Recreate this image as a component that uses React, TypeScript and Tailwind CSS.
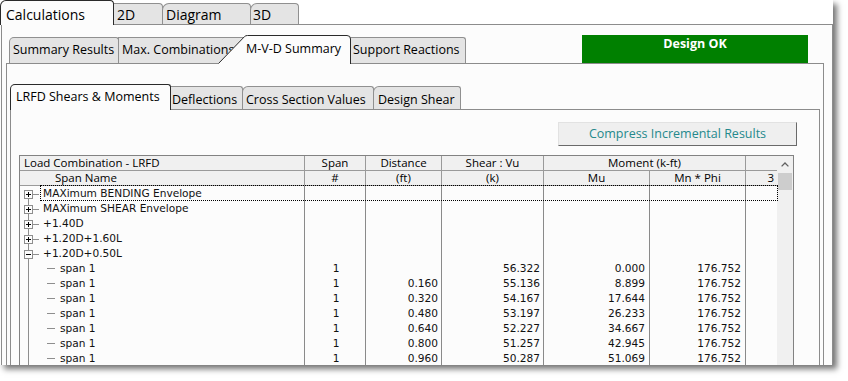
import { memo } from "react"

const uiFont = "font-['Open_Sans','Noto_Sans',sans-serif]"
const gridFont = "font-['DejaVu_Sans','Verdana',sans-serif]"

const groups = [
  "MAXimum BENDING Envelope",
  "MAXimum SHEAR Envelope",
  "+1.40D",
  "+1.20D+1.60L",
  "+1.20D+0.50L",
]

// distance, shear, Mu  (Mn * Phi is constant)
const spanRows = [
  ["", "56.322", "0.000"],
  ["0.160", "55.136", "8.899"],
  ["0.320", "54.167", "17.644"],
  ["0.480", "53.197", "26.233"],
  ["0.640", "52.227", "34.667"],
  ["0.800", "51.257", "42.945"],
  ["0.960", "50.287", "51.069"],
]

const ExpandBox = ({ open }: { open: boolean }) => (
  <span className="absolute left-[4px] top-[4px] h-[9px] w-[9px] border border-[#8e8e8e] bg-[#fcfcfc]">
    <span className="absolute left-[1px] top-[3px] h-px w-[5px] bg-black" />
    {!open && <span className="absolute left-[3px] top-[1px] h-[5px] w-px bg-black" />}
  </span>
)

const NumCells = ({ span, dist, shear, mu, mn }: { span: string; dist: string; shear: string; mu: string; mn: string }) => (
  <>
    <div className="w-[61px] shrink-0 border-r border-[#8a8a8a] pl-[2px] text-center">{span}</div>
    <div className="w-[76px] shrink-0 border-r border-[#8a8a8a] pr-[3px] text-right">{dist}</div>
    <div className="w-[102px] shrink-0 border-r border-[#8a8a8a] pr-[3px] text-right">{shear}</div>
    <div className="w-[106px] shrink-0 border-r border-[#8a8a8a] pr-[4px] text-right">{mu}</div>
    <div className="w-[96px] shrink-0 border-r border-[#8a8a8a] pr-[4px] text-right">{mn}</div>
    <div className="w-[31px] shrink-0" />
  </>
)

const ResultsGrid = () => {
  return (
    <div className="ml-[8px] mt-[9px] flex min-h-0 w-[775px] flex-1 border border-b-0 border-[#828282] bg-[#fcfcfc]">
      {/* Columns */}
      <div className="flex w-[757px] shrink-0 flex-col">
        {/* Header */}
        <div className={`${uiFont} bg-[#f0f0f0] text-[11.5px] leading-[14px] text-black`}>
          <div className="flex h-[15px] border-b border-[#9a9a9a]">
            <div className="w-[285px] shrink-0 border-r border-[#9a9a9a] pl-[4px]">Load Combination - LRFD</div>
            <div className="w-[61px] shrink-0 border-r border-[#9a9a9a] text-center">Span</div>
            <div className="w-[76px] shrink-0 border-r border-[#9a9a9a] text-center">Distance</div>
            <div className="w-[102px] shrink-0 border-r border-[#9a9a9a] text-center">Shear : Vu</div>
            <div className="w-[202px] shrink-0 border-r border-[#9a9a9a] text-center">Moment (k-ft)</div>
            <div className="w-[31px] shrink-0" />
          </div>
          <div className="flex h-[15px] border-b border-[#9a9a9a]">
            <div className="w-[285px] shrink-0 border-r border-[#9a9a9a] pl-[35px]">Span Name</div>
            <div className="w-[61px] shrink-0 border-r border-[#9a9a9a] text-center">#</div>
            <div className="w-[76px] shrink-0 border-r border-[#9a9a9a] text-center">(ft)</div>
            <div className="w-[102px] shrink-0 border-r border-[#9a9a9a] text-center">(k)</div>
            <div className="w-[106px] shrink-0 border-r border-[#9a9a9a] text-center">Mu</div>
            <div className="w-[96px] shrink-0 border-r border-[#9a9a9a] text-center">Mn * Phi</div>
            <div className="w-[31px] shrink-0 pr-[3px] text-right">3</div>
          </div>
        </div>

        {/* Rows */}
        <div className={`${gridFont} relative text-[10.6px] leading-[15px] text-[#111]`}>
          {/* Focus rectangle */}
          <div className="pointer-events-none absolute -top-px left-[20px] z-10 h-[16px] w-[738px] border border-dotted border-black" />

          {groups.map((g, i) => (
            <div key={g} className="flex h-[15px]">
              <div className="relative w-[285px] shrink-0 border-r border-[#8a8a8a] pl-[23px]">
                <span className={`absolute left-[8px] w-px bg-[#8e8e8e] ${i === 0 ? "top-[8px]" : "top-0"} bottom-0`} />
                <span className="absolute left-[13px] top-[8px] h-px w-[6px] bg-[#8e8e8e]" />
                <ExpandBox open={i === groups.length - 1} />
                {g}
              </div>
              <NumCells span="" dist="" shear="" mu="" mn="" />
            </div>
          ))}

          {spanRows.map(([dist, shear, mu], i) => (
            <div key={i} className="flex h-[15px]">
              <div className="relative w-[285px] shrink-0 border-r border-[#8a8a8a] pl-[40px]">
                <span className="absolute bottom-0 left-[8px] top-0 w-px bg-[#8e8e8e]" />
                <span className="absolute left-[27px] top-[7px] h-px w-[8px] bg-[#8e8e8e]" />
                span 1
              </div>
              <NumCells span="1" dist={dist} shear={shear} mu={mu} mn="176.752" />
            </div>
          ))}
        </div>
      </div>

      {/* Scrollbar */}
      <div className="flex w-[16px] shrink-0 flex-col bg-[#f0f0f0]">
        <div className="flex h-[17px] items-center justify-center">
          <svg width="8" height="5" viewBox="0 0 8 5">
            <path d="M0.6 4.4 L4 1 L7.4 4.4" fill="none" stroke="#606060" strokeWidth="1.3" />
          </svg>
        </div>
        <div className="ml-[1px] h-[17px] w-[14px] bg-[#cdcdcd]" />
      </div>
    </div>
  )
}

const App = () => {
  return (
    <div className={`${uiFont} h-[381px] w-[848px] bg-white`}>
      <div className="flex h-[365px] w-[833px] flex-col overflow-hidden bg-[#fcfcfc] shadow-[4px_4px_6px_rgba(0,0,0,0.55)]">
        {/* Main tabs */}
        <div className="flex h-[24px] shrink-0 items-end bg-white text-[14px] leading-[19px] text-black">
          <div className="relative z-10 -mb-px h-[25px] w-[114px] rounded-tl-[6px] rounded-tr-[4px] border border-b-0 border-[#2a2a2a] bg-[#fcfcfc] pl-[5px] pt-[4px]">
            Calculations
          </div>
          <div className="-ml-px h-[21px] w-[50px] rounded-tr-[4px] border border-b-0 border-[#909090] bg-[#e4e4e4] pl-[3px] pt-[1px]">
            2D
          </div>
          <div className="-ml-px h-[21px] w-[89px] rounded-tl-[7px] rounded-tr-[4px] border border-b-0 border-[#909090] bg-[#e4e4e4] pl-[3px] pt-[1px]">
            Diagram
          </div>
          <div className="-ml-px h-[21px] w-[49px] rounded-tl-[7px] rounded-tr-[4px] border border-b-0 border-[#909090] bg-[#e4e4e4] pl-[2px] pt-[1px]">
            3D
          </div>
        </div>

        {/* Level 1 page */}
        <div className="ml-[1px] flex min-h-0 flex-1 flex-col border-l border-r border-t border-[#8c8c8c] pt-[10px]">
          <div className="ml-[4px] mr-[8px] flex min-h-0 flex-1 flex-col">
            {/* Result tabs + status */}
            <div className="flex h-[28px] shrink-0 items-end pl-[3px] text-[12.5px] leading-[17px] text-black">
              <div className="h-[26px] w-[110px] rounded-tl-[5px] rounded-tr-[3px] border border-b-0 border-[#909090] bg-[#e4e4e4] pl-[3px] pt-[3px]">
                Summary Results
              </div>
              <div className="-ml-px h-[26px] w-[130px] shrink-0 overflow-hidden whitespace-nowrap rounded-tr-[3px] border border-b-0 border-[#909090] bg-[#e4e4e4] pl-[3px] pt-[3px]">
                Max. Combinations
              </div>
              <div className="relative z-10 -mb-px -ml-[30px] h-[29px] w-[133px] shrink-0">
                <svg className="absolute inset-0" width="133" height="29" viewBox="0 0 133 29">
                  <path d="M0 29 L0.5 28.5 L26.5 1.6 Q27.6 0.5 29.5 0.5 L129 0.5 Q132.5 0.5 132.5 4 L132.5 29 Z" fill="#fcfcfc" stroke="none" />
                  <path d="M0.5 28.5 L26.5 1.6 Q27.6 0.5 29.5 0.5 L129 0.5 Q132.5 0.5 132.5 4 L132.5 29" fill="none" stroke="#2a2a2a" strokeWidth="1" />
                </svg>
                <div className="relative whitespace-nowrap pl-[28px] pt-[5px]">M-V-D Summary</div>
              </div>
              <div className="-ml-px h-[26px] w-[116px] rounded-tr-[3px] border border-b-0 border-[#909090] bg-[#e4e4e4] pl-[2px] pt-[3px]">
                Support Reactions
              </div>

              <div className="ml-auto mr-[16px] h-[28px] w-[226px] self-start bg-[#008000] text-center text-[12.5px] font-bold text-white">
                Design OK
              </div>
            </div>

            {/* Level 2 page */}
            <div className="flex min-h-0 flex-1 flex-col border-l border-r border-t border-[#8c8c8c] pl-[3px] pr-[3px] pt-[20px]">
              <div className="flex h-[25px] shrink-0 items-end text-[12.5px] leading-[17px] text-black">
                <div className="relative z-10 -mb-px h-[26px] w-[161px] rounded-tl-[5px] rounded-tr-[3px] border border-b-0 border-[#2a2a2a] bg-[#fcfcfc] pl-[5px] pt-[3px]">
                  LRFD Shears &amp; Moments
                </div>
                <div className="-ml-px h-[23px] w-[73px] rounded-tr-[3px] border border-b-0 border-[#909090] bg-[#e4e4e4] pl-[1px] pt-[4px]">
                  Deflections
                </div>
                <div className="-ml-px h-[23px] w-[132px] rounded-tl-[6px] rounded-tr-[3px] border border-b-0 border-[#909090] bg-[#e4e4e4] pl-[3px] pt-[4px]">
                  Cross Section Values
                </div>
                <div className="-ml-px h-[23px] w-[88px] rounded-tl-[6px] rounded-tr-[3px] border border-b-0 border-[#909090] bg-[#e4e4e4] pl-[4px] pt-[4px]">
                  Design Shear
                </div>
              </div>

              {/* Level 3 page */}
              <div className="flex min-h-0 flex-1 flex-col border-l border-r border-t border-[#8c8c8c] pt-[12px]">
                <div className="flex shrink-0 justify-end pr-[22px]">
                  <button
                    type="button"
                    className="h-[24px] w-[239px] border border-[#e2e2e2] border-b-[#6a6a6a] border-r-[#6a6a6a] bg-[#efefef] text-center text-[12.5px] leading-[22px] text-[#25898c]"
                  >
                    Compress Incremental Results
                  </button>
                </div>

                <ResultsGrid />
              </div>
            </div>
          </div>
        </div>
      </div>
    </div>
  )
}

export default memo(App)
